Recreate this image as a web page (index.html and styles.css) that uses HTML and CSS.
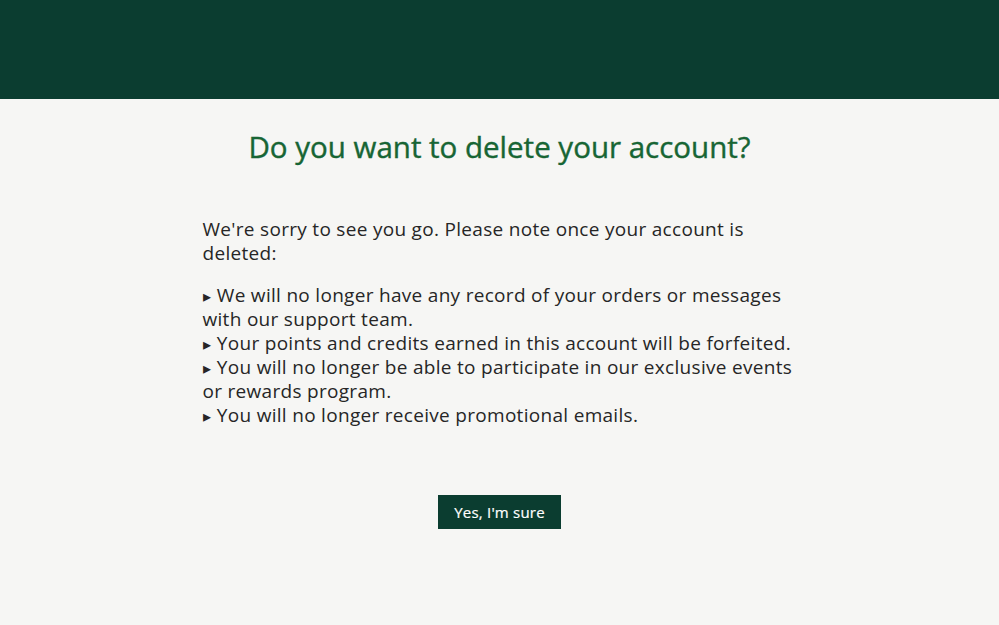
FILE: index.html
```html
<!DOCTYPE html>
<html lang="en">
<head>
<meta charset="utf-8">
<title>Delete account</title>
<link rel="stylesheet" href="styles.css">
</head>
<body>
<header class="topbar"></header>
<main class="content">
  <h1 class="title">Do you want to delete your account?</h1>
  <section class="notice">
    <p class="intro">We're sorry to see you go. Please note once your account is deleted:</p>
    <ul class="consequences">
      <li>We will no longer have any record of your orders or messages with our support team.</li>
      <li>Your points and credits earned in this account will be forfeited.</li>
      <li>You will no longer be able to participate in our exclusive events or rewards program.</li>
      <li>You will no longer receive promotional emails.</li>
    </ul>
  </section>
  <div class="actions">
    <button class="confirm" type="button">Yes, I'm sure</button>
  </div>
</main>
</body>
</html>
```
FILE: styles.css
```css
html, body {
  margin: 0;
  padding: 0;
  background: #f6f6f4;
  font-family: "Open Sans", "Liberation Sans", sans-serif;
}
.topbar {
  height: 99px;
  background: #0b3d30;
}
.content {
  display: flex;
  flex-direction: column;
  align-items: center;
}
.title {
  margin: 28px 0 0;
  font-size: 29.5px;
  line-height: 40px;
  font-weight: 500;
  color: #176534;
  text-align: center;
  -webkit-text-stroke: 0.4px #176534;
}
.notice {
  width: 596px;
  padding-left: 2px;
  margin-top: 50px;
  color: #262626;
  font-size: 19px;
  line-height: 24px;
  letter-spacing: 0.3px;
}
.intro {
  margin: 0;
}
.consequences {
  list-style: none;
  margin: 18px 0 0;
  padding: 0;
}
.consequences li {
  line-height: 24px;
}
.consequences li::before {
  content: "▸";
  font-size: 16px;
  line-height: 10px;
  margin-right: 6px;
}
.actions {
  margin-top: 68px;
}
.confirm {
  width: 123px;
  height: 34px;
  border: none;
  background: #0b3d30;
  color: #ffffff;
  font-family: inherit;
  font-size: 15px;
  font-weight: 500;
  letter-spacing: 0.2px;
  -webkit-text-stroke: 0.2px #ffffff;
  padding: 0;
}
```
